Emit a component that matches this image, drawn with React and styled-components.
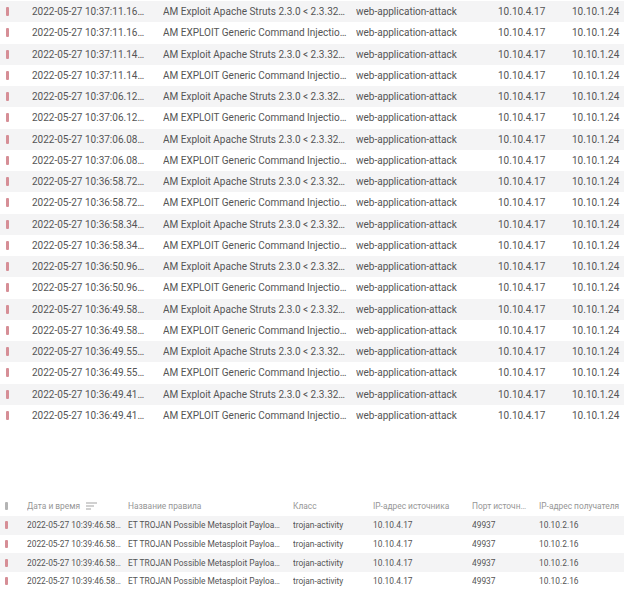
import React from 'react';
import styled, { createGlobalStyle } from 'styled-components';

const GlobalStyle = createGlobalStyle`
  body {
    margin: 0;
    background: #fff;
    font-family: Roboto, "Noto Sans", Arial, sans-serif;
  }
`;

const Page = styled.div`
  width: 624px;
  height: 589px;
  overflow: hidden;
  padding-top: 1px;
  box-sizing: border-box;
`;

const Table = styled.div`
  display: flex;
  flex-direction: column;
  margin-bottom: ${p => p.$gap || 0}px;
`;

const Row = styled.div`
  display: flex;
  align-items: center;
  height: ${p => p.$h}px;
  background: ${p => (p.$shaded ? '#f4f4f5' : '#fff')};
  font-size: ${p => p.$fs}px;
  color: ${p => (p.$head ? '#969696' : '#555555')};
`;

const Cell = styled.div`
  flex: none;
  width: ${p => p.$w}px;
  white-space: nowrap;
  overflow: hidden;
  display: flex;
  align-items: center;
  gap: 6px;
`;

const Marker = styled.span`
  display: block;
  width: 2.5px;
  height: ${p => p.$h}px;
  margin-left: ${p => p.$x}px;
  border-radius: 1px;
  background: ${p => (p.$muted ? '#b4b4b4' : '#d68e96')};
`;

const SortIcon = () => (
  <svg width="11" height="8" viewBox="0 0 11 8">
    <g stroke="#a3a3a3" strokeWidth="1">
      <line x1="0" y1="1" x2="11" y2="1" />
      <line x1="0" y1="4" x2="8" y2="4" />
      <line x1="0" y1="7" x2="5" y2="7" />
    </g>
  </svg>
);

const topTimes = [
  '10:37:11.16', '10:37:11.16', '10:37:11.14', '10:37:11.14',
  '10:37:06.12', '10:37:06.12', '10:37:06.08', '10:37:06.08',
  '10:36:58.72', '10:36:58.72', '10:36:58.34', '10:36:58.34',
  '10:36:50.96', '10:36:50.96', '10:36:49.58', '10:36:49.58',
  '10:36:49.55', '10:36:49.55', '10:36:49.41', '10:36:49.41',
];

const topCols = [32, 131, 193, 142, 74, 52];
const bottomCols = [27, 101, 165, 80, 99, 67, 85];

const App = () => (
  <Page>
    <GlobalStyle />
    <Table $gap={71}>
      {topTimes.map((t, i) => (
        <Row key={i} $h={21.25} $fs={10} $shaded={i % 2 === 0}>
          <Cell $w={topCols[0]}><Marker $x={6} $h={9} /></Cell>
          <Cell $w={topCols[1]}>2022-05-27 {t}…</Cell>
          <Cell $w={topCols[2]}>
            {i % 2 === 0
              ? 'AM Exploit Apache Struts 2.3.0 < 2.3.32…'
              : 'AM EXPLOIT Generic Command Injectio…'}
          </Cell>
          <Cell $w={topCols[3]}>web-application-attack</Cell>
          <Cell $w={topCols[4]}>10.10.4.17</Cell>
          <Cell $w={topCols[5]}>10.10.1.24</Cell>
        </Row>
      ))}
    </Table>
    <Table>
      <Row $h={18.75} $fs={8.4} $head>
        <Cell $w={bottomCols[0]}><Marker $x={5} $h={8} $muted /></Cell>
        <Cell $w={bottomCols[1]}>Дата и время <SortIcon /></Cell>
        <Cell $w={bottomCols[2]}>Название правила</Cell>
        <Cell $w={bottomCols[3]}>Класс</Cell>
        <Cell $w={bottomCols[4]}>IP-адрес источника</Cell>
        <Cell $w={bottomCols[5]}>Порт источн…</Cell>
        <Cell $w={bottomCols[6]}>IP-адрес получателя</Cell>
      </Row>
      {[0, 1, 2, 3].map(i => (
        <Row key={i} $h={18.75} $fs={8.4} $shaded={i % 2 === 0}>
          <Cell $w={bottomCols[0]}><Marker $x={5} $h={8} /></Cell>
          <Cell $w={bottomCols[1]}>2022-05-27 10:39:46.58…</Cell>
          <Cell $w={bottomCols[2]}>ET TROJAN Possible Metasploit Payloa…</Cell>
          <Cell $w={bottomCols[3]}>trojan-activity</Cell>
          <Cell $w={bottomCols[4]}>10.10.4.17</Cell>
          <Cell $w={bottomCols[5]}>49937</Cell>
          <Cell $w={bottomCols[6]}>10.10.2.16</Cell>
        </Row>
      ))}
    </Table>
  </Page>
);

export default App;
